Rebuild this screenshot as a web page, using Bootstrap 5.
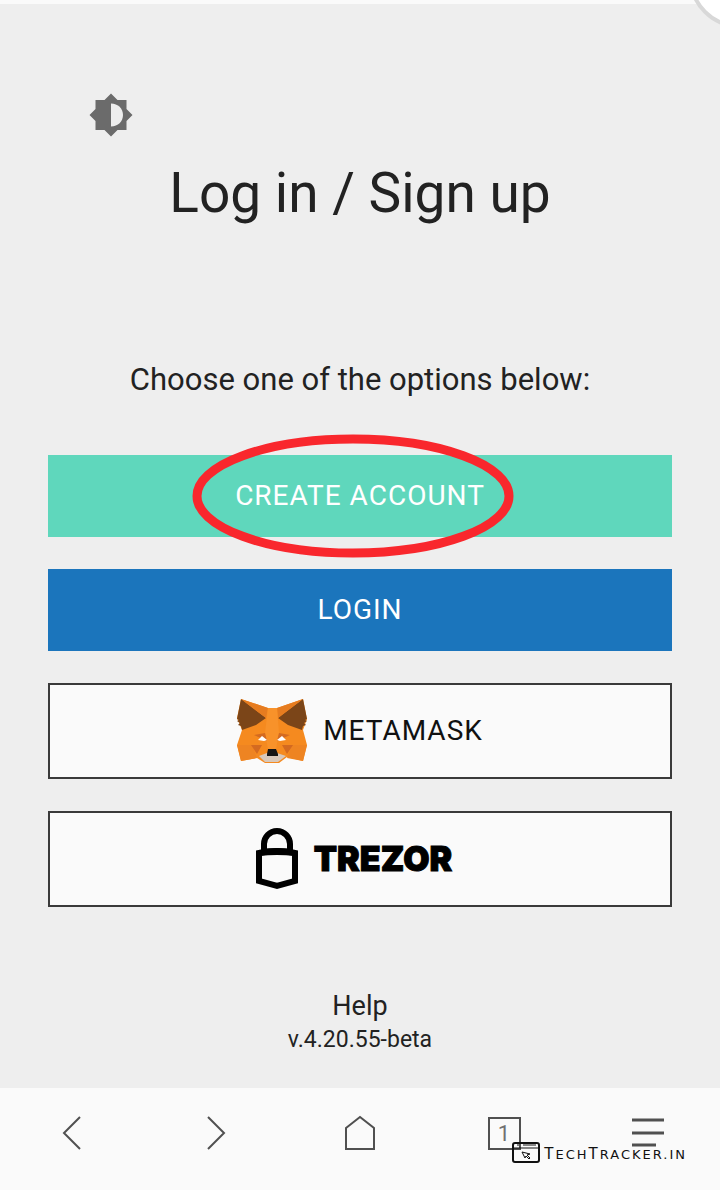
<!DOCTYPE html>
<html lang="en">
<head>
<meta charset="utf-8">
<meta name="viewport" content="width=device-width, initial-scale=1">
<title>Log in / Sign up</title>
<link href="https://cdn.jsdelivr.net/npm/bootstrap@5.3.0/dist/css/bootstrap.min.css" rel="stylesheet">
<style>
  body { font-family: Roboto, sans-serif; background: #eee; color: #222; }
  .page-shell { box-shadow: inset 0 4px #fafafa; }
  .bubble { top: -72px; right: -69px; width: 100px; height: 100px; background: #fff; border: 4px solid #d8d8d8; }
  .wallet { padding: 92px 48px 24px; }
  .theme-btn { margin-left: 40px; }
  .title { font-size: 55px; line-height: 72px; margin: 19px 0 131px; }
  .intro { font-size: 31px; line-height: 40px; margin-bottom: 55px; }
  .options { gap: 32px; }
  .option { --bs-btn-border-radius: 0; --bs-btn-font-size: 28px; --bs-btn-line-height: 32px; letter-spacing: 1px; height: 82px; border: 0; }
  .create, .create:hover { background: #5fd7bc; color: #fff; }
  .login, .login:hover { background: #1b75bc; color: #fff; }
  .outlined, .outlined:hover { height: 96px; background: #fafafa; color: #111; border: 2px solid #3a3a3a; }
  .option:hover { filter: brightness(.96); }
  .ring { left: 144px; top: -22px; width: 322px; height: 126px; pointer-events: none; }
  .trezor { padding-right: 24px; letter-spacing: 0; }
  .trezor-name { font-family: Inter, sans-serif; font-weight: 900; font-size: 34px; -webkit-text-stroke: 1px #000; color: #000; }
  .help { font-size: 27px; line-height: 36px; margin-top: 81px; }
  .help a { color: inherit; }
  .version { font-size: 23px; line-height: 32px; }
  .browser-bar { background: #fafafa; height: 102px; padding-bottom: 12px; }
  .browser-bar .btn { --bs-btn-border-radius: 0; --bs-btn-border-width: 0; }
  .browser-bar .tab-count { width: 33px; height: 33px; border: 2px solid #505050; font-size: 22px; line-height: 30px; color: #707070; }
  .watermark { right: 33px; bottom: 24px; color: #111; font-family: "DejaVu Sans", sans-serif; font-size: 13px; line-height: 22px; letter-spacing: 2px; }
  .initial { font-size: 15px; line-height: 1; }
</style>
</head>
<body>
<div class="page-shell position-relative overflow-hidden min-vh-100 d-flex flex-column">
  <div class="bubble position-absolute rounded-circle"></div>
  <main class="wallet flex-grow-1 text-center">
    <div class="text-start">
      <button type="button" class="theme-btn btn p-0 border-0 d-block" aria-label="Toggle theme">
        <svg class="d-block" width="46" height="46" viewBox="0 0 46 46"><path fill="#6b6b6b" d="M23 1.500l6.500 6.500h9v9l6 6-6 6v9h-9L23 44.500 16.500 38h-9v-9l-6-6 6-6V8h9z"/><path fill="#eee" d="M23 11.500c7 0 12 5 12 11.500s-5 11.500-12 11.500z"/></svg>
      </button>
    </div>
    <h1 class="title fw-normal">Log in / Sign up</h1>
    <p class="intro">Choose one of the options below:</p>
    <div class="options d-grid">
      <div class="position-relative d-grid">
        <button type="button" class="btn option create">CREATE ACCOUNT</button>
        <svg class="ring position-absolute" viewBox="0 0 322 126"><ellipse cx="161" cy="63" rx="156" ry="57" fill="none" stroke="#f9272d" stroke-width="9"/></svg>
      </div>
      <button type="button" class="btn option login">LOGIN</button>
      <button type="button" class="btn option outlined d-flex align-items-center justify-content-center gap-3">
        <svg width="70" height="66" viewBox="0 0 70 66">
          <path fill="#f58a1f" d="M4 1l27 9h9L66 1l4 20-4 11 4 15-4 16-16-4-8 6H28l-8-5-16 3-4-16 5-15-5-12z"/>
          <path fill="#7b4518" d="M4 1l25 19-10 7-14 5-1-4-3-1 2-2-3-2 2-1L0 21zM66 1L41 20l10 7 14 5 1-4 3-1-2-2 3-2-2-1 2-1z"/>
          <path fill="#e67c20" d="M4 1l27 9-2 10zM66 1L40 10l1 10z"/>
          <path fill="#ee8422" d="M0 47h15l5 13-16 3zM70 47H55l-5 13 16 3z"/>
          <path fill="#f8922a" d="M31 10h9l2 25-3 16h-8l-3-16z"/>
          <path fill="#d46a20" d="M17 37l11-2 2 8zM53 37l-11-2-2 8zM14 47h11l-5 9zM56 47H45l5 9z"/>
          <path fill="#fff" d="M21 42l4-4 5 4-3 1zM49 42l-4-4-5 4 3 1z"/>
          <path fill="#d8c8ba" d="M22 58l8-3h10l9 3-8 6H28z"/>
          <path fill="#151515" d="M31 51h8l2 5v2H30v-2z"/>
        </svg>
        <span>METAMASK</span>
      </button>
      <button type="button" class="btn option outlined trezor d-flex align-items-center justify-content-center gap-3">
        <svg width="42" height="62" viewBox="0 0 42 62"><path fill="none" stroke="#000" stroke-width="6" d="M8 24V16a13 13 0 0 1 26 0v8M3 53V25q18-4 36 0v28L21 58z"/><path d="M3 22q18-4 36 0v6q-18-2-36 0z"/></svg>
        <span class="trezor-name">TREZOR</span>
      </button>
    </div>
    <div class="help"><a href="#" class="text-decoration-none">Help</a></div>
    <div class="version">v.4.20.55-beta</div>
  </main>
  <nav class="browser-bar position-relative" aria-label="Browser">
    <div class="row row-cols-5 g-0 align-items-center text-center h-100">
      <div class="col"><button type="button" class="btn p-0" aria-label="Back"><svg class="d-block" width="36" height="36" viewBox="0 0 36 36" fill="none" stroke="#505050" stroke-width="2"><path d="M26 2L10 18l16 16"/></svg></button></div>
      <div class="col"><button type="button" class="btn p-0" aria-label="Forward"><svg class="d-block" width="36" height="36" viewBox="0 0 36 36" fill="none" stroke="#505050" stroke-width="2"><path d="M10 2l16 16-16 16"/></svg></button></div>
      <div class="col"><button type="button" class="btn p-0" aria-label="Home"><svg class="d-block" width="36" height="36" viewBox="0 0 36 36" fill="none" stroke="#505050" stroke-width="2"><path d="M4 13L18 2l14 11v21H4z"/></svg></button></div>
      <div class="col"><button type="button" class="btn p-0 tab-count" aria-label="Tabs: 1">1</button></div>
      <div class="col"><button type="button" class="btn p-0" aria-label="Menu"><svg class="d-block" width="36" height="36" viewBox="0 0 36 36" fill="none" stroke="#505050" stroke-width="3"><path d="M2 5h32M2 18h32M2 30h24"/></svg></button></div>
    </div>
    <div class="watermark position-absolute d-flex align-items-center text-nowrap">
      <svg width="28" height="22" viewBox="0 0 28 22" fill="none" stroke="#111" stroke-width="2"><rect x="1" y="1" width="26" height="19" rx="2"/><path stroke-width="1" d="M1 6h26M11 3h13M5 3h2"/><path stroke-width="1" d="M10 10l8 2-3 1 3 3-1 1-3-3-1 2z"/></svg>
      <span class="ms-1 pt-1 text-uppercase"><span class="initial">T</span>ech<span class="initial">T</span>racker.in</span>
    </div>
  </nav>
</div>
<script src="https://cdn.jsdelivr.net/npm/bootstrap@5.3.0/dist/js/bootstrap.bundle.min.js"></script>
</body>
</html>
